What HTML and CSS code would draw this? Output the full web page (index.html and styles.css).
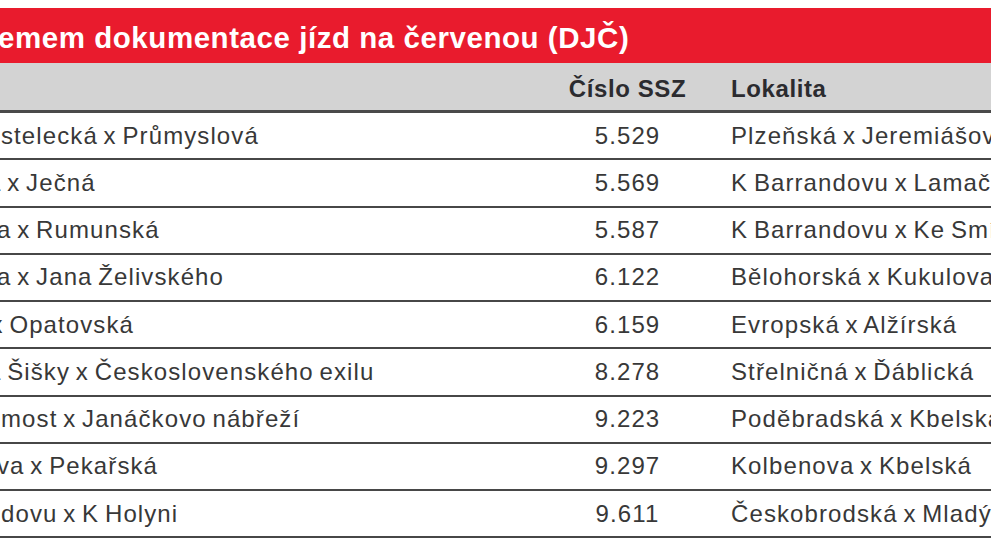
FILE: index.html
```html
<!DOCTYPE html>
<html lang="cs">
<head>
<meta charset="utf-8">
<title>DJČ</title>
<link rel="stylesheet" href="styles.css">
</head>
<body>
<div class="page">
  <div class="title"><span class="title-text">emem dokumentace jízd na červenou (DJČ)</span></div>
  <div class="table">
    <div class="row head">
      <div class="c1"></div>
      <div class="c2">Číslo SSZ</div>
      <div class="c3">Lokalita</div>
    </div>
    <div class="row">
      <div class="c1">stelecká x Průmyslová</div>
      <div class="c2">5.529</div>
      <div class="c3">Plzeňská x Jeremiášova</div>
    </div>
    <div class="row">
      <div class="c1"><span class="cut-a">a</span> x Ječná</div>
      <div class="c2">5.569</div>
      <div class="c3">K Barrandovu x Lamačova</div>
    </div>
    <div class="row">
      <div class="c1"><span class="cut-s">a</span> x Rumunská</div>
      <div class="c2">5.587</div>
      <div class="c3">K Barrandovu x Ke Smíchovu</div>
    </div>
    <div class="row">
      <div class="c1"><span class="cut-s">a</span> x Jana Želivského</div>
      <div class="c2">6.122</div>
      <div class="c3">Bělohorská x Kukulova</div>
    </div>
    <div class="row">
      <div class="c1"><span class="cut-x">x</span> Opatovská</div>
      <div class="c2">6.159</div>
      <div class="c3">Evropská x Alžírská</div>
    </div>
    <div class="row">
      <div class="c1"><span class="cut-a">a</span> Šišky x Československého exilu</div>
      <div class="c2">8.278</div>
      <div class="c3">Střelničná x Ďáblická</div>
    </div>
    <div class="row">
      <div class="c1">most x Janáčkovo nábřeží</div>
      <div class="c2">9.223</div>
      <div class="c3">Poděbradská x Kbelská</div>
    </div>
    <div class="row">
      <div class="c1"><span class="cut-s">v</span>a x Pekařská</div>
      <div class="c2">9.297</div>
      <div class="c3">Kolbenova x Kbelská</div>
    </div>
    <div class="row">
      <div class="c1">dovu x K Holyni</div>
      <div class="c2">9.611</div>
      <div class="c3">Českobrodská x Mladých</div>
    </div>
  </div>
</div>
</body>
</html>
```

FILE: styles.css
```css
html, body {
  margin: 0;
  padding: 0;
  background: #ffffff;
}

.page {
  width: 991px;
  height: 558px;
  overflow: hidden;
  padding-top: 8px;
  box-sizing: border-box;
  font-family: "Liberation Sans", Arial, sans-serif;
}

.title {
  height: 55px;
  background: #e91b2d;
  display: flex;
  align-items: center;
  white-space: nowrap;
}

.title-text {
  margin-left: -2px;
  color: #ffffff;
  font-weight: 700;
  font-size: 29.5px;
  letter-spacing: 0.55px;
  padding-top: 4px;
}

.table {
  display: flex;
  flex-direction: column;
}

.row {
  display: grid;
  grid-template-columns: 555px 145px 1fr;
  height: 47.25px;
  box-sizing: border-box;
  border-bottom: 2px solid #474747;
  align-items: center;
  font-size: 24px;
  letter-spacing: 1.1px;
  word-spacing: -2px;
  color: #383838;
  white-space: nowrap;
}

.row.head {
  height: 50px;
  background: #d3d3d3;
  border-bottom: 3px solid #4a4a4a;
  font-weight: 700;
  color: #2b2b2f;
  letter-spacing: 0.6px;
  word-spacing: 0;
  padding-top: 4px;
}

.c1 {
  overflow: hidden;
  padding-left: 1px;
}

.c2 {
  text-align: center;
}

.c3 {
  padding-left: 31px;
  overflow: hidden;
}

.cut-a {
  display: inline-block;
  margin-left: -14px;
}

.cut-s {
  display: inline-block;
  margin-left: -4px;
}

.cut-x {
  display: inline-block;
  margin-left: -10.5px;
}
```
